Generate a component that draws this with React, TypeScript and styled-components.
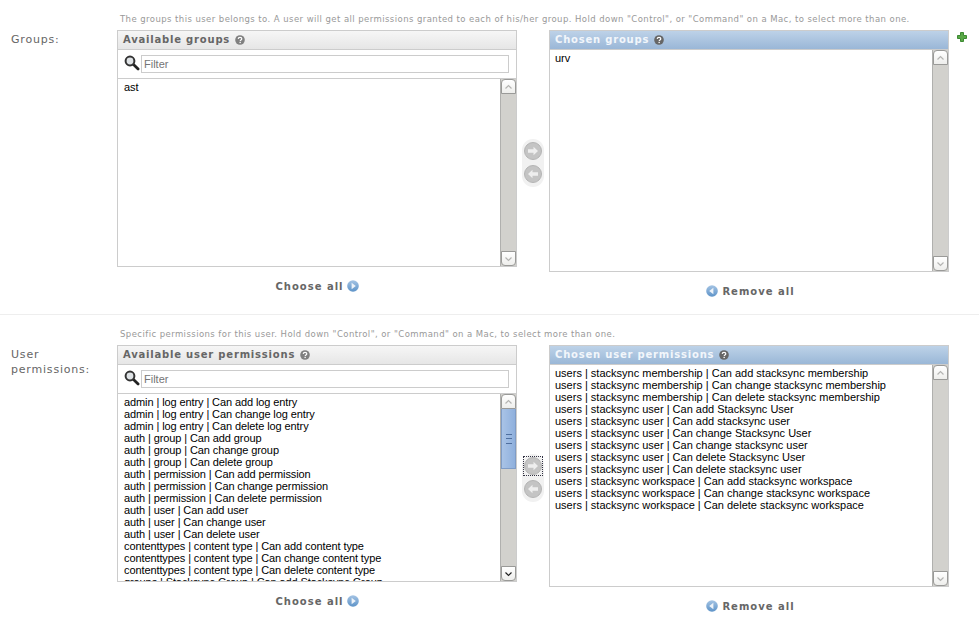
import React from "react";
import styled, { createGlobalStyle } from "styled-components";

const GlobalStyle = createGlobalStyle`
  html, body {
    margin: 0;
    padding: 0;
    background: #fff;
    overflow: hidden;
  }
`;

const Page = styled.div`
  width: 979px;
  height: 624px;
  overflow: hidden;
  font-family: "DejaVu Sans", sans-serif;
`;
const FieldRow = styled.section<{ $first?: boolean }>`
  display: grid;
  grid-template-columns: 117px 1fr;
  height: ${(p) => (p.$first ? "315px" : "309px")};
  padding-top: 14px;
  box-sizing: border-box;
  border-bottom: ${(p) => (p.$first ? "1px solid #eee" : "none")};
`;
const FieldLabel = styled.label`
  padding: 18px 0 0 11px;
  font-size: 11px;
  line-height: 15px;
  letter-spacing: 0.8px;
  color: #666;
`;
const Help = styled.p`
  margin: 0 0 5px 3px;
  height: 11px;
  font-size: 8.5px;
  line-height: 11px;
  letter-spacing: 0.43px;
  color: #999;
  white-space: nowrap;
`;
const Selector = styled.div`
  display: flex;
  align-items: flex-start;
`;
const Side = styled.div`
  width: 400px;
`;
const Box = styled.div<{ $chosen?: boolean }>`
  box-sizing: border-box;
  width: 400px;
  height: ${(p) => (p.$chosen ? "242px" : "237px")};
  border: 1px solid #ccc;
  display: flex;
  flex-direction: column;
`;
const Title = styled.h2<{ $chosen?: boolean }>`
  margin: 0;
  flex: none;
  box-sizing: border-box;
  height: 19px;
  padding: 0 0 1px 5px;
  font-size: 10px;
  line-height: 16px;
  font-weight: bold;
  letter-spacing: 0.8px;
  white-space: nowrap;
  display: flex;
  align-items: center;
  gap: 5px;
  color: ${(p) => (p.$chosen ? "#f2f6fb" : "#666")};
  background: ${(p) =>
    p.$chosen
      ? "linear-gradient(#bdd2e8, #9ab7d7)"
      : "linear-gradient(#f6f6f6, #e6e6e6)"};
  border-bottom: 1px solid #ccc;
`;
const FilterBar = styled.div`
  flex: none;
  box-sizing: border-box;
  height: 29px;
  padding: 5px 7px 0 6px;
  border-bottom: 1px solid #ccc;
  display: flex;
  align-items: flex-start;
  gap: 1px;
`;
const FilterInput = styled.input`
  box-sizing: border-box;
  flex: 1;
  min-width: 0;
  height: 18px;
  padding: 0 2px;
  margin: 0;
  border: 1px solid #ccc;
  border-radius: 0;
  outline: none;
  background: #fff;
  font-family: "Liberation Sans", sans-serif;
  font-size: 11px;
  &::placeholder {
    color: #757575;
    opacity: 1;
  }
`;
const ListArea = styled.div`
  flex: 1;
  min-height: 0;
  display: flex;
`;
const Options = styled.ul<{ $chosen?: boolean }>`
  flex: 1;
  margin: 0;
  padding: 2px 0 0 ${(p) => (p.$chosen ? "5px" : "6px")};
  list-style: none;
  overflow: hidden;
  font-family: "Liberation Sans", sans-serif;
  font-size: 11px;
  line-height: 12px;
  letter-spacing: ${(p) => (p.$chosen ? "0" : "-0.1px")};
  color: #000;
  white-space: nowrap;
`;
const Track = styled.div`
  flex: none;
  box-sizing: border-box;
  width: 16px;
  background: #d2d1cd;
  border-left: 1px solid #b0b0ae;
  display: flex;
  flex-direction: column;
`;
const ScrollButton = styled.div<{ $down?: boolean }>`
  flex: none;
  box-sizing: border-box;
  width: 15px;
  height: 15px;
  background: linear-gradient(#fff, #eeeeec);
  border: 1px solid #9a9a98;
  border-radius: ${(p) => (p.$down ? "0 0 4px 4px" : "4px 4px 0 0")};
  display: flex;
  align-items: center;
  justify-content: center;
  margin-top: ${(p) => (p.$down ? "auto" : "0")};
`;
const Thumb = styled.div`
  flex: none;
  box-sizing: border-box;
  width: 15px;
  height: 60px;
  background: linear-gradient(90deg, #a9c3e6, #8fb0dd);
  border: 1px solid #7f9cc6;
  border-top: none;
  display: flex;
  align-items: center;
  justify-content: center;
`;
const Grip = styled.div`
  width: 6px;
  height: 8px;
  border-top: 1px solid #4f6f9f;
  border-bottom: 1px solid #4f6f9f;
  position: relative;
  &::after {
    content: "";
    position: absolute;
    left: 0;
    right: 0;
    top: 3px;
    height: 1px;
    background: #4f6f9f;
  }
`;
const Chooser = styled.div`
  flex: none;
  width: 32px;
  display: flex;
  justify-content: center;
`;
const ArrowPill = styled.div`
  box-sizing: border-box;
  margin-top: 109px;
  width: 22px;
  height: 48px;
  padding: 3px 2px;
  border-radius: 11px;
  background: #f1f1f1;
  display: flex;
  flex-direction: column;
  align-items: center;
  gap: 5px;
`;
const ArrowSlot = styled.div<{ $focused?: boolean }>`
  width: 18px;
  height: 18px;
  display: flex;
  outline: ${(p) => (p.$focused ? "1px dotted #334" : "none")};
`;
const AllLink = styled.div<{ $remove?: boolean }>`
  box-sizing: border-box;
  height: 14px;
  display: flex;
  align-items: center;
  justify-content: center;
  gap: ${(p) => (p.$remove ? "4px" : "3px")};
  margin-top: 12px;
  padding-left: ${(p) => (p.$remove ? "3px" : "0")};
  font-size: 10px;
  font-weight: bold;
  letter-spacing: 1px;
  color: #666;
`;
const AddLink = styled.div`
  flex: none;
  margin: 2px 0 0 8px;
  display: flex;
`;
const SearchSvg = styled.svg`
  flex: none;
`;

const HelpIcon = ({ light }: { light?: boolean }) => (
  <svg width="10" height="10" viewBox="0 0 10 10">
    <circle cx="5" cy="5" r="4.8" fill={light ? "#666" : "#808080"} />
    <path d="M3.2 3.9C3.3 2.8 4 2.3 5 2.3s1.8.6 1.8 1.5c0 1.2-1.6 1.2-1.6 2.3" fill="none" stroke="#fff" strokeWidth="1.2" />
    <rect x="4.5" y="6.8" width="1.3" height="1.3" fill="#fff" />
  </svg>
);
const SearchIcon = () => (
  <SearchSvg width="16" height="16" viewBox="0 0 16 16">
    <path d="M9.5 9.5l4.6 4.4" stroke="#222" strokeWidth="2.8" strokeLinecap="round" />
    <circle cx="6" cy="6" r="4.4" fill="#dfe3e6" stroke="#333" strokeWidth="2" />
  </SearchSvg>
);
const PlusIcon = () => (
  <svg width="10" height="10" viewBox="0 0 10 10">
    <path d="M3.5.5h3v3h3v3h-3v3h-3v-3h-3v-3h3z" fill="#5aa846" stroke="#3c8a32" strokeWidth="1" />
  </svg>
);
const UpChevron = ({ down, dark }: { down?: boolean; dark?: boolean }) => (
  <svg width="9" height="6" viewBox="0 0 9 6">
    <path
      d={down ? "M1.5 1.5l3 3 3-3" : "M1.5 4.5l3-3 3 3"}
      fill="none"
      stroke={dark ? "#222" : "#b4b4b2"}
      strokeWidth="1.2"
    />
  </svg>
);
const MoveArrow = ({ left }: { left?: boolean }) => (
  <svg width="18" height="18" viewBox="0 0 18 18">
    <circle cx="9" cy="9" r="8.5" fill="#c4c4c4" stroke="#b4b4b4" />
    <path
      d={left ? "M4 9l4.5-4.2V7.300h5.500v3.400H8.500V13.200z" : "M14 9L9.500 4.800V7.300H4v3.400h5.500V13.200z"}
      fill="#eee"
    />
  </svg>
);
const AllIcon = ({ left }: { left?: boolean }) => (
  <svg width="12" height="12" viewBox="0 0 12 12">
    <defs>
      <linearGradient id="allBlue" x1="0" y1="0" x2="0" y2="1">
        <stop offset="0" stopColor="#a5c4e4" />
        <stop offset="1" stopColor="#5d93c8" />
      </linearGradient>
    </defs>
    <circle cx="6" cy="6" r="5.8" fill="url(#allBlue)" />
    <path d={left ? "M3.200 6L7.400 2.800v6.400z" : "M8.800 6L4.600 2.800v6.400z"} fill="#eef3f9" />
  </svg>
);

const Scrollbar = ({ active }: { active?: boolean }) => (
  <Track>
    <ScrollButton>
      <UpChevron />
    </ScrollButton>
    {active && (
      <Thumb>
        <Grip />
      </Thumb>
    )}
    <ScrollButton $down>
      <UpChevron down dark={active} />
    </ScrollButton>
  </Track>
);

const OptionList = ({ items, active, chosen }: { items: string[]; active?: boolean; chosen?: boolean }) => (
  <ListArea>
    <Options $chosen={chosen}>
      {items.map((item) => (
        <li key={item}>{item}</li>
      ))}
    </Options>
    <Scrollbar active={active} />
  </ListArea>
);

const availablePermissions = [
  "admin | log entry | Can add log entry",
  "admin | log entry | Can change log entry",
  "admin | log entry | Can delete log entry",
  "auth | group | Can add group",
  "auth | group | Can change group",
  "auth | group | Can delete group",
  "auth | permission | Can add permission",
  "auth | permission | Can change permission",
  "auth | permission | Can delete permission",
  "auth | user | Can add user",
  "auth | user | Can change user",
  "auth | user | Can delete user",
  "contenttypes | content type | Can add content type",
  "contenttypes | content type | Can change content type",
  "contenttypes | content type | Can delete content type",
  "groups | Stacksync Group | Can add Stacksync Group",
];
const chosenPermissions = [
  "users | stacksync membership | Can add stacksync membership",
  "users | stacksync membership | Can change stacksync membership",
  "users | stacksync membership | Can delete stacksync membership",
  "users | stacksync user | Can add Stacksync User",
  "users | stacksync user | Can add stacksync user",
  "users | stacksync user | Can change Stacksync User",
  "users | stacksync user | Can change stacksync user",
  "users | stacksync user | Can delete Stacksync User",
  "users | stacksync user | Can delete stacksync user",
  "users | stacksync workspace | Can add stacksync workspace",
  "users | stacksync workspace | Can change stacksync workspace",
  "users | stacksync workspace | Can delete stacksync workspace",
];

interface FieldProps {
  first?: boolean;
  label: string;
  help: string;
  availableTitle: string;
  chosenTitle: string;
  available: string[];
  chosen: string[];
  activeScroll?: boolean;
  focusedArrow?: boolean;
  showAdd?: boolean;
}

const Field = ({
  first,
  label,
  help,
  availableTitle,
  chosenTitle,
  available,
  chosen,
  activeScroll,
  focusedArrow,
  showAdd,
}: FieldProps) => (
  <FieldRow $first={first}>
    <FieldLabel>{label}</FieldLabel>
    <div>
      <Help>{help}</Help>
      <Selector>
        <Side>
          <Box>
            <Title>
              {availableTitle} <HelpIcon />
            </Title>
            <FilterBar>
              <SearchIcon />
              <FilterInput placeholder="Filter" readOnly />
            </FilterBar>
            <OptionList items={available} active={activeScroll} />
          </Box>
          <AllLink>
            Choose all <AllIcon />
          </AllLink>
        </Side>
        <Chooser>
          <ArrowPill>
            <ArrowSlot $focused={focusedArrow}>
              <MoveArrow />
            </ArrowSlot>
            <ArrowSlot>
              <MoveArrow left />
            </ArrowSlot>
          </ArrowPill>
        </Chooser>
        <Side>
          <Box $chosen>
            <Title $chosen>
              {chosenTitle} <HelpIcon light />
            </Title>
            <OptionList items={chosen} chosen />
          </Box>
          <AllLink $remove>
            <AllIcon left /> Remove all
          </AllLink>
        </Side>
        {showAdd && (
          <AddLink>
            <PlusIcon />
          </AddLink>
        )}
      </Selector>
    </div>
  </FieldRow>
);

export default function App() {
  return (
    <Page>
      <GlobalStyle />
      <Field
        first
        label="Groups:"
        help={'The groups this user belongs to. A user will get all permissions granted to each of his/her group. Hold down "Control", or "Command" on a Mac, to select more than one.'}
        availableTitle="Available groups"
        chosenTitle="Chosen groups"
        available={["ast"]}
        chosen={["urv"]}
        showAdd
      />
      <Field
        label="User permissions:"
        help={'Specific permissions for this user. Hold down "Control", or "Command" on a Mac, to select more than one.'}
        availableTitle="Available user permissions"
        chosenTitle="Chosen user permissions"
        available={availablePermissions}
        chosen={chosenPermissions}
        activeScroll
        focusedArrow
      />
    </Page>
  );
}
